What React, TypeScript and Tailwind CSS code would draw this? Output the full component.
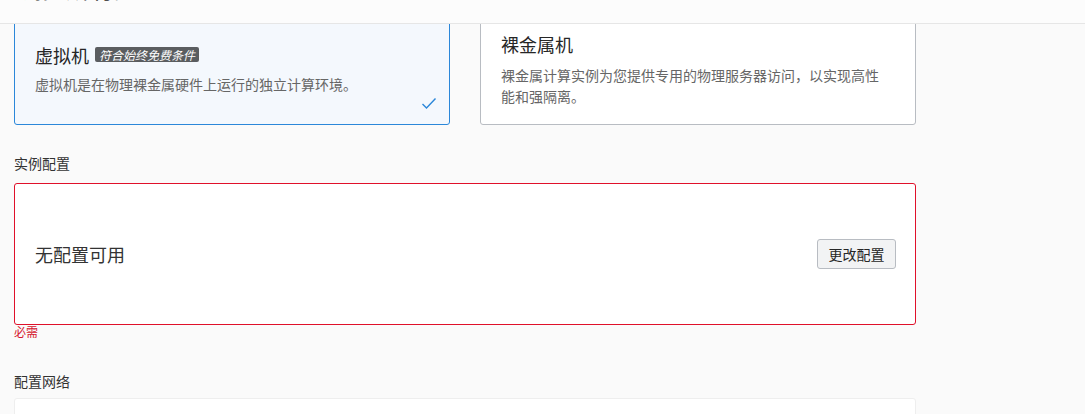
import React from "react";

const font = { fontFamily: '"Noto Sans CJK SC", "Noto Sans", sans-serif' };

export default function App() {
  return (
    <div className="h-[414px] w-full overflow-hidden bg-[#fafafa] flex flex-col text-[#333]" style={font}>
      <div className="h-[24px] shrink-0 overflow-hidden bg-[#fcfcfc] border-b border-[#e6e6e6]">
        <div className="pl-[18px] -mt-[26px] text-[24px] leading-[28px] text-[#262626]">浏览所有配置</div>
      </div>
      <div className="flex-1 overflow-hidden">
        <div className="-mt-[12px] pl-[14px] w-[916px]">
          <div className="flex gap-[30px] items-stretch">
            <div className="relative w-[436px] h-[113px] border border-[#2b87d9] rounded-[3px] bg-[#f4f8fd] px-5 flex flex-col justify-center">
              <div className="flex items-center gap-[6px]">
                <span className="text-[18px] leading-[24px] text-[#262626]">虚拟机</span>
                <span className="bg-[#5a5d60] text-white italic text-[12px] leading-[15px] px-[4px] rounded-[2px]">符合始终免费条件</span>
              </div>
              <div className="mt-[7px] text-[14px] leading-[21px] text-[#666]">虚拟机是在物理裸金属硬件上运行的独立计算环境。</div>
              <svg className="absolute right-[12px] bottom-[14px]" width="16" height="13" viewBox="0 0 16 13" fill="none">
                <path d="M1.5 7 L5.5 11 L14.5 1.5" stroke="#2b87d9" strokeWidth="1.4" />
              </svg>
            </div>
            <div className="w-[436px] h-[113px] border border-[#b8bcc2] rounded-[3px] bg-white pl-5 pr-[26px] pt-[19px]">
              <div className="text-[18px] leading-[24px] text-[#262626]">裸金属机</div>
              <div className="mt-[9px] text-[14px] leading-[21px] text-[#666]">裸金属计算实例为您提供专用的物理服务器访问，以实现高性能和强隔离。</div>
            </div>
          </div>
          <div className="mt-[28px] text-[14px] leading-[20px] text-[#333]">实例配置</div>
          <div className="mt-[10px] h-[142px] border border-[#e0102a] rounded-[3px] bg-white flex items-center justify-between pl-5 pr-[19px]">
            <span className="text-[18px] leading-[24px] text-[#333]">无配置可用</span>
            <button className="h-[30px] w-[79px] border border-[#b8bcc2] rounded-[3px] bg-[#f2f3f4] text-[14px] text-[#262626]">更改配置</button>
          </div>
          <div className="-mt-[1px] text-[12px] leading-[16px] text-[#d5152e]">必需</div>
          <div className="mt-[31px] text-[14px] leading-[20px] text-[#333]">配置网络</div>
          <div className="mt-[7px] h-[80px] border border-[#eeeeee] rounded-[3px] bg-white"></div>
        </div>
      </div>
    </div>
  );
}
